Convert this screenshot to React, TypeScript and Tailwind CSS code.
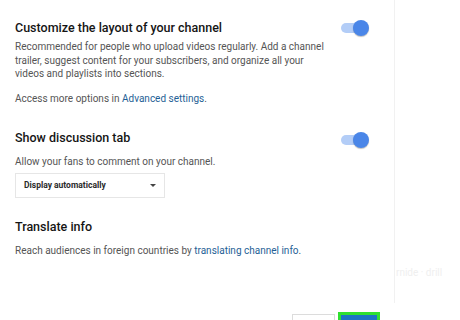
import React from "react";

function Toggle() {
  return (
    <div className="relative w-[28px] h-[16px] shrink-0">
      <div className="absolute left-0 top-[3px] w-[24px] h-[10px] rounded-full bg-[#b3cdf7]" />
      <div className="absolute right-0 top-0 w-[16px] h-[16px] rounded-full bg-[#4a86e8] shadow-[0_1px_1px_rgba(0,0,0,0.25)]" />
    </div>
  );
}

export default function App() {
  return (
    <div className="w-[460px] h-[320px] overflow-hidden bg-white flex flex-col font-['Roboto',sans-serif]">
      <div className="flex h-[303px] shrink-0">
        <div className="w-[395px] border-r border-[#f1f1f1] pl-[15px] flex flex-col">
          {/* Section 1 */}
          <div className="flex pt-[18px]">
            <div className="w-[320px]">
              <div className="text-[12.5px] leading-[20px] font-medium text-[#151515]">
                Customize the layout of your channel
              </div>
              <p className="mt-[2px] text-[10px] leading-[13.5px] text-[#555]">
                Recommended for people who upload videos regularly. Add a channel trailer, suggest content for your subscribers, and organize all your videos and playlists into sections.
              </p>
              <p className="mt-[11.5px] text-[10px] leading-[13.5px] text-[#555]">
                Access more options in <span className="text-[#1f5f96]">Advanced settings</span>.
              </p>
            </div>
            <div className="ml-[6px] mt-[2px]">
              <Toggle />
            </div>
          </div>
          {/* Section 2 */}
          <div className="flex mt-[22.5px]">
            <div className="w-[320px]">
              <div className="text-[12.5px] leading-[20px] font-medium text-[#151515]">
                Show discussion tab
              </div>
              <p className="mt-[6.5px] text-[10px] leading-[13.5px] text-[#555]">
                Allow your fans to comment on your channel.
              </p>
              <div className="mt-[5px] w-[150px] h-[25px] border border-[#e6e6e6] flex items-center pl-[8px] pr-[8px]">
                <span className="text-[8.5px] font-bold text-[#2a2a2a]">
                  Display automatically
                </span>
                <span className="ml-auto w-0 h-0 border-l-[3px] border-r-[3px] border-t-[3px] border-l-transparent border-r-transparent border-t-[#444]" />
              </div>
            </div>
            <div className="ml-[6px] mt-[4px]">
              <Toggle />
            </div>
          </div>
          {/* Section 3 */}
          <div className="mt-[18.5px]">
            <div className="text-[12.5px] leading-[20px] font-medium text-[#151515]">
              Translate info
            </div>
            <p className="mt-[7px] text-[10px] leading-[13.5px] text-[#555]">
              Reach audiences in foreign countries by <span className="text-[#1f5f96]">translating channel info</span>.
            </p>
          </div>
        </div>
        <div className="flex-1 pt-[259px] pl-[1px]">
          <span className="text-[10px] text-[#efefef] whitespace-nowrap">rnide · drill</span>
        </div>
      </div>
      <div className="flex mt-[9px] pl-[292px] items-start">
        <div className="mt-[2px] w-[43px] h-[20px] border border-[#dcdcdc] bg-white" />
        <div className="ml-[3px] w-[42px] h-[20px] border-[3px] border-[#2fe02f] bg-[#1b74c4]" />
      </div>
    </div>
  );
}
